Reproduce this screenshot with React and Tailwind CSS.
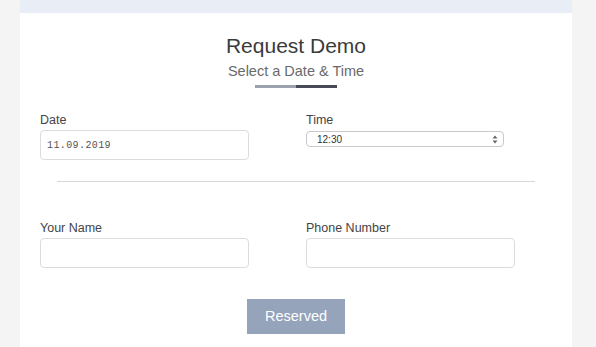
export default function App() {
  return (
    <div className="w-full h-[347px] bg-[#f4f4f4] overflow-hidden flex" style={{ fontFamily: '"Liberation Sans", Arial, sans-serif' }}>
      <div className="ml-[20px] w-[552px] h-full flex flex-col">
        <div className="h-[13px] bg-[#e9edf5] shrink-0" />
        <div className="flex-1 bg-white flex flex-col">
          <div className="pt-[20px] flex flex-col items-center">
            <h1 className="text-[21px] leading-[26px] text-[#3b3b3b]">Request Demo</h1>
            <p className="mt-[3px] text-[14.5px] leading-[18px] text-[#6a6a6a]">Select a Date &amp; Time</p>
            <div className="mt-[5px] flex h-[3px] w-[82px]">
              <div className="w-1/2 bg-[#9ba2ae]" />
              <div className="w-1/2 bg-[#464a54]" />
            </div>
          </div>

          <div className="mt-[24px] pl-[20px] flex">
            <div className="w-[266px]">
              <div className="text-[12.5px] leading-[16px] text-[#444]">Date</div>
              <div className="mt-[2px] h-[30px] w-[209px] rounded-[4px] border border-[#dcdcdc] flex items-center pl-[6px]">
                <span className="text-[10px] tracking-[0.4px] text-[#555]" style={{ fontFamily: '"Liberation Mono", monospace' }}>11.09.2019</span>
              </div>
            </div>
            <div>
              <div className="text-[12.5px] leading-[16px] text-[#444]">Time</div>
              <div className="mt-[3px] h-[16px] w-[198px] rounded-[4px] border border-[#c9c9c9] flex items-center justify-between pl-[10px] pr-[5px]">
                <span className="text-[10px] text-[#333]">12:30</span>
                <svg width="6" height="9" viewBox="0 0 6 9">
                  <path d="M3 0.5 L5.5 3.5 L0.5 3.5 Z" fill="#666" />
                  <path d="M3 8.5 L5.5 5.5 L0.5 5.5 Z" fill="#666" />
                </svg>
              </div>
            </div>
          </div>

          <div className="mt-[21px] mx-[37px] h-px bg-[#d6d6d6]" />

          <div className="mt-[38px] pl-[20px] flex">
            <div className="w-[266px]">
              <div className="text-[12.5px] leading-[16px] text-[#444]">Your Name</div>
              <div className="mt-[2px] h-[30px] w-[209px] rounded-[4px] border border-[#dcdcdc]" />
            </div>
            <div>
              <div className="text-[12.5px] leading-[16px] text-[#444]">Phone Number</div>
              <div className="mt-[2px] h-[30px] w-[209px] rounded-[4px] border border-[#dcdcdc]" />
            </div>
          </div>

          <div className="mt-[31px] flex justify-center">
            <button className="w-[98px] h-[35px] bg-[#95a3bb] text-white text-[14.5px]">Reserved</button>
          </div>
        </div>
      </div>
    </div>
  );
}
